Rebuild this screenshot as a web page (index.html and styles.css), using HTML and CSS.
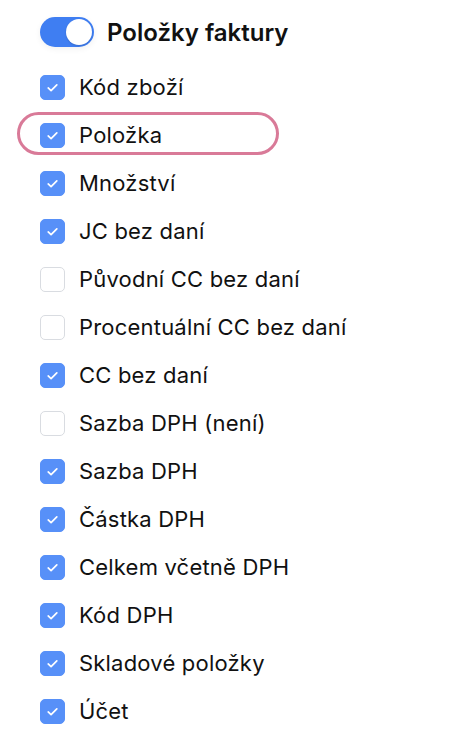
FILE: index.html
```html
<!DOCTYPE html>
<html lang="cs">
<head>
<meta charset="utf-8">
<link rel="stylesheet" href="styles.css">
</head>
<body>
<div class="panel">
  <div class="header">
    <span class="toggle"><span class="knob"></span></span>
    <span class="title">Položky faktury</span>
  </div>
  <ul class="list">
    <li class="row"><span class="cb on"><svg viewBox="0 0 24 24"><path d="M7.5 12.5l3 2.8 6-6"/></svg></span>Kód zboží</li>
    <li class="row hl"><span class="cb on"><svg viewBox="0 0 24 24"><path d="M7.5 12.5l3 2.8 6-6"/></svg></span>Položka</li>
    <li class="row"><span class="cb on"><svg viewBox="0 0 24 24"><path d="M7.5 12.5l3 2.8 6-6"/></svg></span>Množství</li>
    <li class="row"><span class="cb on"><svg viewBox="0 0 24 24"><path d="M7.5 12.5l3 2.8 6-6"/></svg></span>JC bez daní</li>
    <li class="row"><span class="cb"></span>Původní CC bez daní</li>
    <li class="row"><span class="cb"></span>Procentuální CC bez daní</li>
    <li class="row"><span class="cb on"><svg viewBox="0 0 24 24"><path d="M7.5 12.5l3 2.8 6-6"/></svg></span>CC bez daní</li>
    <li class="row"><span class="cb"></span>Sazba DPH (není)</li>
    <li class="row"><span class="cb on"><svg viewBox="0 0 24 24"><path d="M7.5 12.5l3 2.8 6-6"/></svg></span>Sazba DPH</li>
    <li class="row"><span class="cb on"><svg viewBox="0 0 24 24"><path d="M7.5 12.5l3 2.8 6-6"/></svg></span>Částka DPH</li>
    <li class="row"><span class="cb on"><svg viewBox="0 0 24 24"><path d="M7.5 12.5l3 2.8 6-6"/></svg></span>Celkem včetně DPH</li>
    <li class="row"><span class="cb on"><svg viewBox="0 0 24 24"><path d="M7.5 12.5l3 2.8 6-6"/></svg></span>Kód DPH</li>
    <li class="row"><span class="cb on"><svg viewBox="0 0 24 24"><path d="M7.5 12.5l3 2.8 6-6"/></svg></span>Skladové položky</li>
    <li class="row"><span class="cb on"><svg viewBox="0 0 24 24"><path d="M7.5 12.5l3 2.8 6-6"/></svg></span>Účet</li>
  </ul>
</div>
</body>
</html>
```
FILE: styles.css
```css
html, body {
  margin: 0;
  padding: 0;
  background: #ffffff;
}
body {
  font-family: Inter, "Noto Sans", sans-serif;
  color: #111111;
}
.panel {
  padding: 17px 0 0 40px;
}
.header {
  display: flex;
  align-items: center;
  gap: 13px;
  height: 30px;
}
.toggle {
  width: 54px;
  height: 30px;
  border-radius: 15px;
  background: #3f7ef2;
  display: flex;
  align-items: center;
  justify-content: flex-end;
  padding: 0 2px;
  box-sizing: border-box;
  box-shadow: 0 2px 6px rgba(0,0,0,0.06);
}
.knob {
  width: 26px;
  height: 26px;
  border-radius: 50%;
  background: #ffffff;
  box-shadow: 0 1px 2px rgba(0,0,0,0.15);
}
.title {
  font-size: 24px;
  font-weight: 600;
}
.list {
  list-style: none;
  margin: 16px 0 0 0;
  padding: 0;
}
.row {
  position: relative;
  display: flex;
  align-items: center;
  gap: 14px;
  height: 48px;
  font-size: 22px;
  letter-spacing: 0.2px;
  font-weight: 400;
}
.cb {
  width: 25px;
  height: 25px;
  box-sizing: border-box;
  border-radius: 5px;
  border: 1.5px solid #d9dce1;
  background: #fff;
  display: flex;
  align-items: center;
  justify-content: center;
  flex: none;
}
.cb.on {
  background: #5790f8;
  border-color: #5790f8;
}
.cb svg {
  width: 23px;
  height: 23px;
  fill: none;
  stroke: #ffffff;
  stroke-width: 1.8;
  stroke-linecap: round;
  stroke-linejoin: round;
}
.hl::before {
  content: "";
  position: absolute;
  left: -23px;
  top: 1px;
  width: 262px;
  height: 43px;
  box-sizing: border-box;
  border: 3px solid #d97a98;
  border-radius: 22px;
}
```
